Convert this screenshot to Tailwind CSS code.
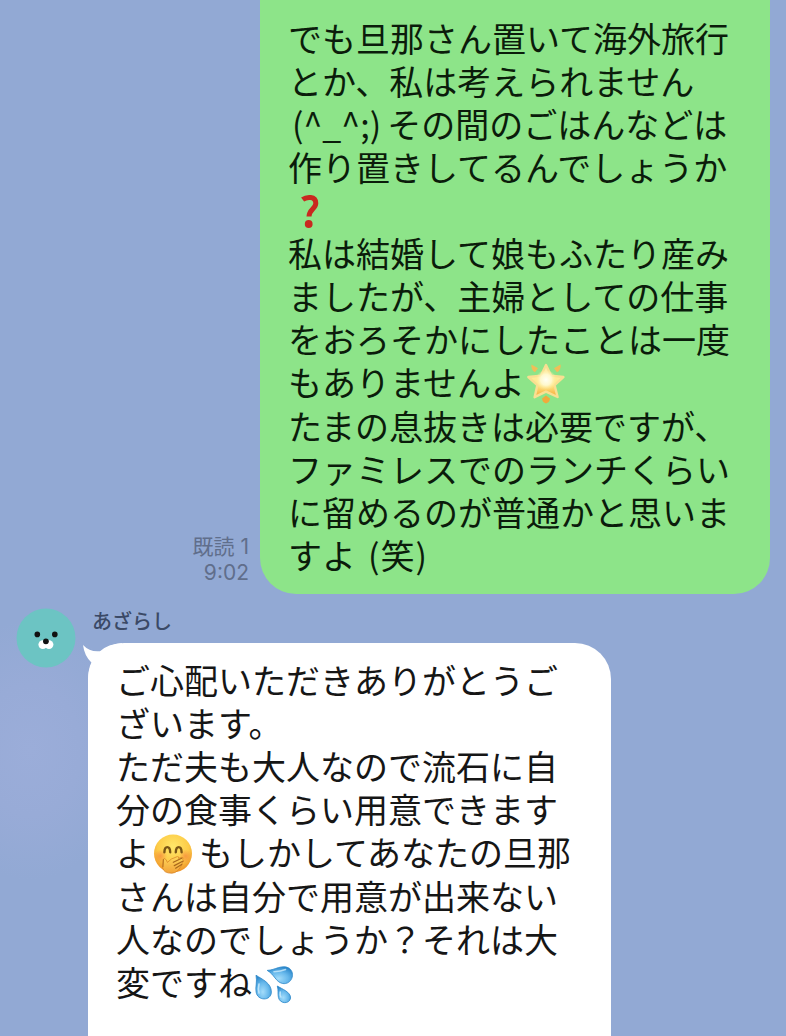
<!DOCTYPE html>
<html lang="ja">
<head>
<meta charset="utf-8">
<meta name="viewport" content="width=device-width, initial-scale=1">
<title>トーク</title>
<script src="https://cdn.jsdelivr.net/npm/@tailwindcss/browser@4"></script>
</head>
<body class="bg-[#92a9d4] font-['Noto_Sans_CJK_JP',sans-serif]">
<main class="flex min-h-screen flex-col bg-[radial-gradient(ellipse_100px_130px_at_30px_750px,#9badd9_0%,#98abd7_50%,transparent_100%)]">

  <!-- Sent message -->
  <article class="flex items-end justify-end pr-4">
    <div class="mr-[11px] pb-2 text-right font-['Inter','Noto_Sans_CJK_JP',sans-serif] text-[21px] leading-[26px] text-[#606e8b]">
      <p>既読 1</p>
      <p><time datetime="09:02">9:02</time></p>
    </div>
    <div class="rounded-b-[36px] bg-[#8de489] pt-4 pr-10 pb-[18px] pl-7 text-[34px] leading-[43px] text-[#0b1c0b]">
      <p>でも旦那さん置いて海外旅行<br>とか、私は考えられません<br><span class="mr-1.5 ml-1">(^_^;)</span>その間のごはんなどは<br>作り置きしてるんでしょうか<br><svg role="img" aria-label="❓" class="ml-3 inline-block align-[-6px]" width="20" height="36" viewBox="0 0 20 36"><path d="M2.6 5.6C6.5 2.6 15.8 1.8 15.8 9.2C15.8 14.8 9 15.4 9 22.6" fill="none" stroke="#c9281f" stroke-width="5"/><circle cx="8.7" cy="30" r="3.9" fill="#c9281f"/></svg><br>私は結婚して娘もふたり産み<br>ましたが、主婦としての仕事<br>をおろそかにしたことは一度<br>もありませんよ<svg role="img" aria-label="🌟" class="ml-px inline-block align-[-8px]" width="40" height="42" viewBox="0 0 40 42"><defs><linearGradient id="star" x1="0" y1="0" x2="0" y2="1"><stop offset="0" stop-color="#ffeeb0"/><stop offset=".6" stop-color="#ffe98c"/><stop offset="1" stop-color="#f5a733"/></linearGradient><radialGradient id="glow" cx=".5" cy=".42" r=".5"><stop offset="0" stop-color="#fffff4"/><stop offset=".5" stop-color="#fffad4" stop-opacity=".9"/><stop offset="1" stop-color="#ffe98c" stop-opacity="0"/></radialGradient></defs><path d="M20 3L25 13.6L37.4 15L28.6 23.2L31.6 35L20 29.6L8.6 35.2L11.3 23.2L2.3 15L15 13.6Z" fill="url(#star)" stroke="#f8df92" stroke-width="2.4" stroke-linejoin="round"/><circle cx="20" cy="19.5" r="11" fill="url(#glow)"/><g fill="#f0be58"><path d="M5.4 2.4L12 6.2L9 10.2Q4.8 8 5.4 2.4Z"/><path d="M34.6 2.4L28 6.2L31 10.2Q35.2 8 34.6 2.4Z"/><path fill="#f0a93c" d="M20 33.6L24 36.6Q23.4 41 20 41.4Q16.6 41 16 36.6Z"/></g></svg><br>たまの息抜きは必要ですが、<br>ファミレスでのランチくらい<br>に留めるのが普通かと思いま<br>すよ<span class="ml-3">(</span><span class="mx-px">笑</span>)</p>
    </div>
  </article>

  <!-- Received message -->
  <article class="mt-[14px] flex flex-1 items-stretch pl-4">
    <svg role="img" aria-label="あざらしのアイコン" class="shrink-0" width="60" height="60" viewBox="0 0 60 60">
      <circle cx="30" cy="30" r="29.5" fill="#6cc4c3"/>
      <g fill="#fff"><circle cx="26.8" cy="36.6" r="4.4"/><circle cx="33" cy="36.6" r="4.4"/></g>
      <g fill="#111"><circle cx="21.3" cy="26.4" r="2.8"/><circle cx="38.8" cy="26.4" r="2.8"/><circle cx="29.9" cy="33.3" r="2.9"/></g>
    </svg>
    <div class="flex flex-col pl-3">
      <h2 class="mb-[9px] pl-1 text-[20px] leading-[26px] font-medium text-[#3b4966]">あざらし</h2>
      <div class="relative flex-1 rounded-t-[36px] bg-white pt-[15px] pr-10 pb-8 pl-7 text-[34px] leading-[43px] text-[#161616]">
        <svg aria-hidden="true" class="absolute top-0 -left-[6px]" width="40" height="40" viewBox="0 0 40 40"><path d="M1 2Q8 9.4 18 8.2Q26 1 40 0L36 30L6 38Q6 26 9.4 19.4Q2.4 13 1 2Z" fill="#fff"/></svg>
        <p class="relative">ご心配いただきありがとうご<br>ざいます。<br>ただ夫も大人なので流石に自<br>分の食事くらい用意できます<br>よ<svg role="img" aria-label="🤭" class="mr-[6px] ml-[3px] inline-block align-[-8px]" width="40" height="40" viewBox="0 0 40 40"><defs><radialGradient id="face" cx=".5" cy=".32" r=".68"><stop offset="0" stop-color="#ffe76a"/><stop offset=".6" stop-color="#fdcc48"/><stop offset="1" stop-color="#ee9227"/></radialGradient><radialGradient id="blush"><stop offset="0" stop-color="#f47a3c" stop-opacity=".6"/><stop offset="1" stop-color="#f47a3c" stop-opacity="0"/></radialGradient><linearGradient id="hand" x1="0" y1="0" x2="0" y2="1"><stop offset="0" stop-color="#ffd75b"/><stop offset="1" stop-color="#f2a338"/></linearGradient></defs><circle cx="20" cy="19.5" r="19" fill="url(#face)"/><circle cx="7.5" cy="22" r="6.5" fill="url(#blush)"/><circle cx="32.5" cy="22" r="6.5" fill="url(#blush)"/><path d="M11.4 18.2C11.6 11.4 17 11.4 17.2 18.2M22.8 18.2C23 11.4 28.4 11.4 28.6 18.2" fill="none" stroke="#7a5515" stroke-width="2.4" stroke-linecap="round"/><path d="M10.4 25.2Q12 23.4 13.2 26L14.4 28.4Q17.5 24.5 24.3 22.6Q26.6 22.5 25.5 24.4L29 23.2Q31 23.4 29.6 25.4L30.6 26.3Q31 28 29 29.2Q30 30.4 28 32.2Q24.5 38.8 18.8 39.2Q10.4 39.2 9.6 33.5Z" fill="url(#hand)" stroke="#d98527" stroke-width=".8"/><path d="M20.3 28.3L28.7 24.3M21.3 31.6L29.7 27.2M22.6 34.2L28.6 30.4" fill="none" stroke="#a9681c" stroke-width="1.2" stroke-linecap="round"/><path d="M10.4 25.2L9.9 33.2" stroke="#b5711f" stroke-width="1"/></svg>もしかしてあなたの旦那<br>さんは自分で用意が出来ない<br>人なのでしょうか？それは大<br>変ですね<svg role="img" aria-label="💦" class="ml-[2px] inline-block align-[-8px]" width="40" height="40" viewBox="0 0 40 40"><defs><radialGradient id="drop" cx=".45" cy=".7" r=".75"><stop offset="0" stop-color="#a4dcfa"/><stop offset=".5" stop-color="#68b9ec"/><stop offset="1" stop-color="#2380c6"/></radialGradient></defs><g fill="url(#drop)" stroke="#2c88c9" stroke-width=".8"><path d="M2 11.2C8 15.2 17.5 19 17.4 28.2C17 37.2 3.5 37.2 2.1 28C1.2 22.6 3.4 17.8 2 11.2Z"/><path d="M13.2 6.4C21 6.2 28 0 35.2 4.2C42 9.4 37.5 21 28.6 19.5C21.5 18 20.5 10.4 13.2 6.4Z"/><path d="M23.3 22C28 25 36.8 28 36.6 34C35.6 40.6 25.8 40 24.4 33.4C23.6 29.4 24.6 26.5 23.3 22Z"/></g><g fill="none" stroke="#d5f1ff" stroke-width="1.6" stroke-linecap="round" opacity=".75"><path d="M5 20Q3.8 25 5 29"/><path d="M20 7.8Q27 7.6 31.5 5.6"/><path d="M26.2 28Q25.8 31 26.8 33"/></g></svg></p>
      </div>
    </div>
  </article>
</main>
</body>
</html>
